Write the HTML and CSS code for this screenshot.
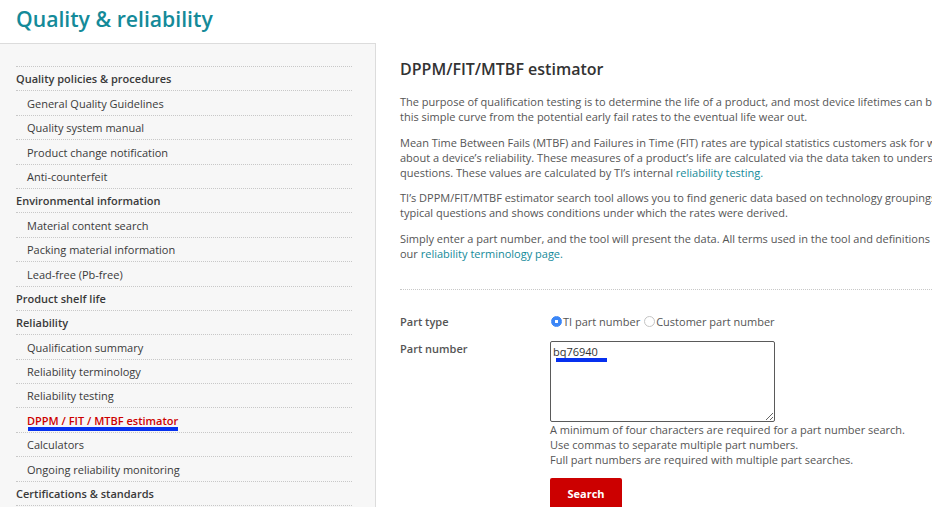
FILE: index.html
```html
<!DOCTYPE html>
<html lang="en">
<head>
<meta charset="utf-8">
<title>Quality &amp; reliability</title>
<link rel="stylesheet" href="styles.css">
</head>
<body>
<header class="page-header">
  <h1 class="page-title">Quality &amp; reliability</h1>
</header>
<div class="layout">
  <aside class="sidebar">
    <ul class="nav">
      <li class="nav-group">Quality policies &amp; procedures</li>
      <li class="nav-item">General Quality Guidelines</li>
      <li class="nav-item">Quality system manual</li>
      <li class="nav-item">Product change notification</li>
      <li class="nav-item">Anti-counterfeit</li>
      <li class="nav-group">Environmental information</li>
      <li class="nav-item">Material content search</li>
      <li class="nav-item">Packing material information</li>
      <li class="nav-item">Lead-free (Pb-free)</li>
      <li class="nav-group">Product shelf life</li>
      <li class="nav-group">Reliability</li>
      <li class="nav-item">Qualification summary</li>
      <li class="nav-item">Reliability terminology</li>
      <li class="nav-item">Reliability testing</li>
      <li class="nav-item nav-active"><span class="marked">DPPM / FIT / MTBF estimator</span></li>
      <li class="nav-item">Calculators</li>
      <li class="nav-item">Ongoing reliability monitoring</li>
      <li class="nav-group">Certifications &amp; standards</li>
    </ul>
  </aside>
  <main class="content">
    <h2 class="content-title">DPPM/FIT/MTBF estimator</h2>
    <p class="para">The purpose of qualification testing is to determine the life of a product, and most device lifetimes can be described using<br>this simple curve from the potential early fail rates to the eventual life wear out.</p>
    <p class="para">Mean Time Between Fails (MTBF) and Failures in Time (FIT) rates are typical statistics customers ask for when inquiring<br>about a device’s reliability. These measures of a product’s life are calculated via the data taken to understand these<br>questions. These values are calculated by TI’s internal <a class="link" href="#">reliability testing.</a></p>
    <p class="para">TI’s DPPM/FIT/MTBF estimator search tool allows you to find generic data based on technology groupings that answer these<br>typical questions and shows conditions under which the rates were derived.</p>
    <p class="para">Simply enter a part number, and the tool will present the data. All terms used in the tool and definitions can be found on<br>our <a class="link" href="#">reliability terminology page.</a></p>
    <div class="separator"></div>
    <form class="form">
      <div class="form-label">Part type</div>
      <div class="radios">
        <label class="radio-label"><input class="radio" type="radio" name="ptype" checked>TI part number</label>
        <label class="radio-label"><input class="radio" type="radio" name="ptype">Customer part number</label>
      </div>
      <div class="form-label">Part number</div>
      <div class="field">
        <div class="textarea-wrap">
          <textarea class="textarea">bq76940</textarea>
          <span class="textarea-mark"></span>
        </div>
        <div class="help">A minimum of four characters are required for a part number search.<br>Use commas to separate multiple part numbers.<br>Full part numbers are required with multiple part searches.</div>
        <button class="btn" type="button">Search</button>
      </div>
    </form>
  </main>
</div>
</body>
</html>
```
FILE: styles.css
```css
html, body {
  margin: 0;
  padding: 0;
  background: #fff;
  overflow: hidden;
}
body {
  font-family: "Open Sans", "Noto Sans", sans-serif;
  color: #555;
  width: 932px;
  height: 507px;
}
.page-header {
  height: 43px;
  padding: 3px 0 0 16px;
  box-sizing: border-box;
}
.page-title {
  margin: 0;
  font-size: 21.2px;
  font-weight: 600;
  color: #148a99;
  line-height: 31px;
}
.layout {
  display: flex;
  align-items: flex-start;
}
.sidebar {
  flex: none;
  width: 376px;
  box-sizing: border-box;
  background: #f7f7f7;
  border-top: 1px solid #dcdcdc;
  border-right: 1px solid #dcdcdc;
  padding: 22px 23px 40px 16px;
  height: 600px;
}
.nav {
  list-style: none;
  margin: 0;
  padding: 0;
  border-top: 1px dotted #c8c8c8;
}
.nav li {
  font-size: 11px;
  line-height: 14.4px;
  padding: 5.4px 0 3.6px;
  border-bottom: 1px dotted #c8c8c8;
  color: #3a3a3a;
  white-space: nowrap;
}
.nav-group {
  font-weight: 600;
  color: #333;
}
.nav-item {
  padding-left: 11px !important;
}
.nav-active {
  color: #cc0000 !important;
  font-weight: 600;
}
.marked {
  position: relative;
}
.marked::after {
  content: "";
  position: absolute;
  left: 1px;
  right: 0;
  top: 14.5px;
  height: 4px;
  background: #0630ef;
}
.content {
  flex: none;
  width: 700px;
  padding: 15px 0 0 24px;
}
.content-title {
  margin: 0 0 14px;
  font-size: 16px;
  font-weight: 600;
  line-height: 22px;
  color: #333;
}
.para {
  margin: 0 0 10.5px;
  font-size: 11px;
  line-height: 15px;
  color: #555;
  white-space: nowrap;
}
.link {
  color: #148a99;
  text-decoration: none;
}
.separator {
  margin-top: 28px;
  border-top: 1px dotted #c8c8c8;
  width: 560px;
}
.form {
  display: grid;
  grid-template-columns: 150px 1fr;
  row-gap: 12px;
  margin-top: 24.5px;
  font-size: 11px;
  line-height: 15px;
}
.form-label {
  font-weight: 600;
  color: #555;
}
.radios {
  display: flex;
  align-items: center;
  color: #555;
}
.radio-label {
  display: flex;
  align-items: center;
  margin-right: 3px;
}
.radio {
  appearance: none;
  -webkit-appearance: none;
  width: 11px;
  height: 11px;
  margin: 0 1px 0 1px;
  border-radius: 50%;
  border: 1px solid #c4c4c4;
  background: #fff;
  box-sizing: border-box;
}
.radio:checked {
  border-color: #3b86f7;
  background: radial-gradient(circle, #fff 0 1.4px, #3b86f7 1.9px);
}
.textarea-wrap {
  position: relative;
  width: 225px;
}
.textarea {
  display: block;
  width: 225px;
  height: 81px;
  box-sizing: border-box;
  border: 1px solid #5a5a5a;
  border-radius: 2px;
  padding: 2px 2px;
  font-family: "Open Sans", sans-serif;
  font-size: 11px;
  line-height: 15px;
  color: #333;
  resize: both;
  background: #fff;
}
.textarea-mark {
  position: absolute;
  left: 6px;
  top: 17px;
  width: 51px;
  height: 4px;
  background: #0630ef;
}
.help {
  margin-top: 0;
  color: #555;
}
.btn {
  margin-top: 11px;
  width: 72px;
  height: 31px;
  border: 0;
  border-radius: 2px;
  background: #cc0000;
  color: #fff;
  font-family: "Open Sans", sans-serif;
  font-weight: 700;
  font-size: 11px;
  padding: 0;
}
```
